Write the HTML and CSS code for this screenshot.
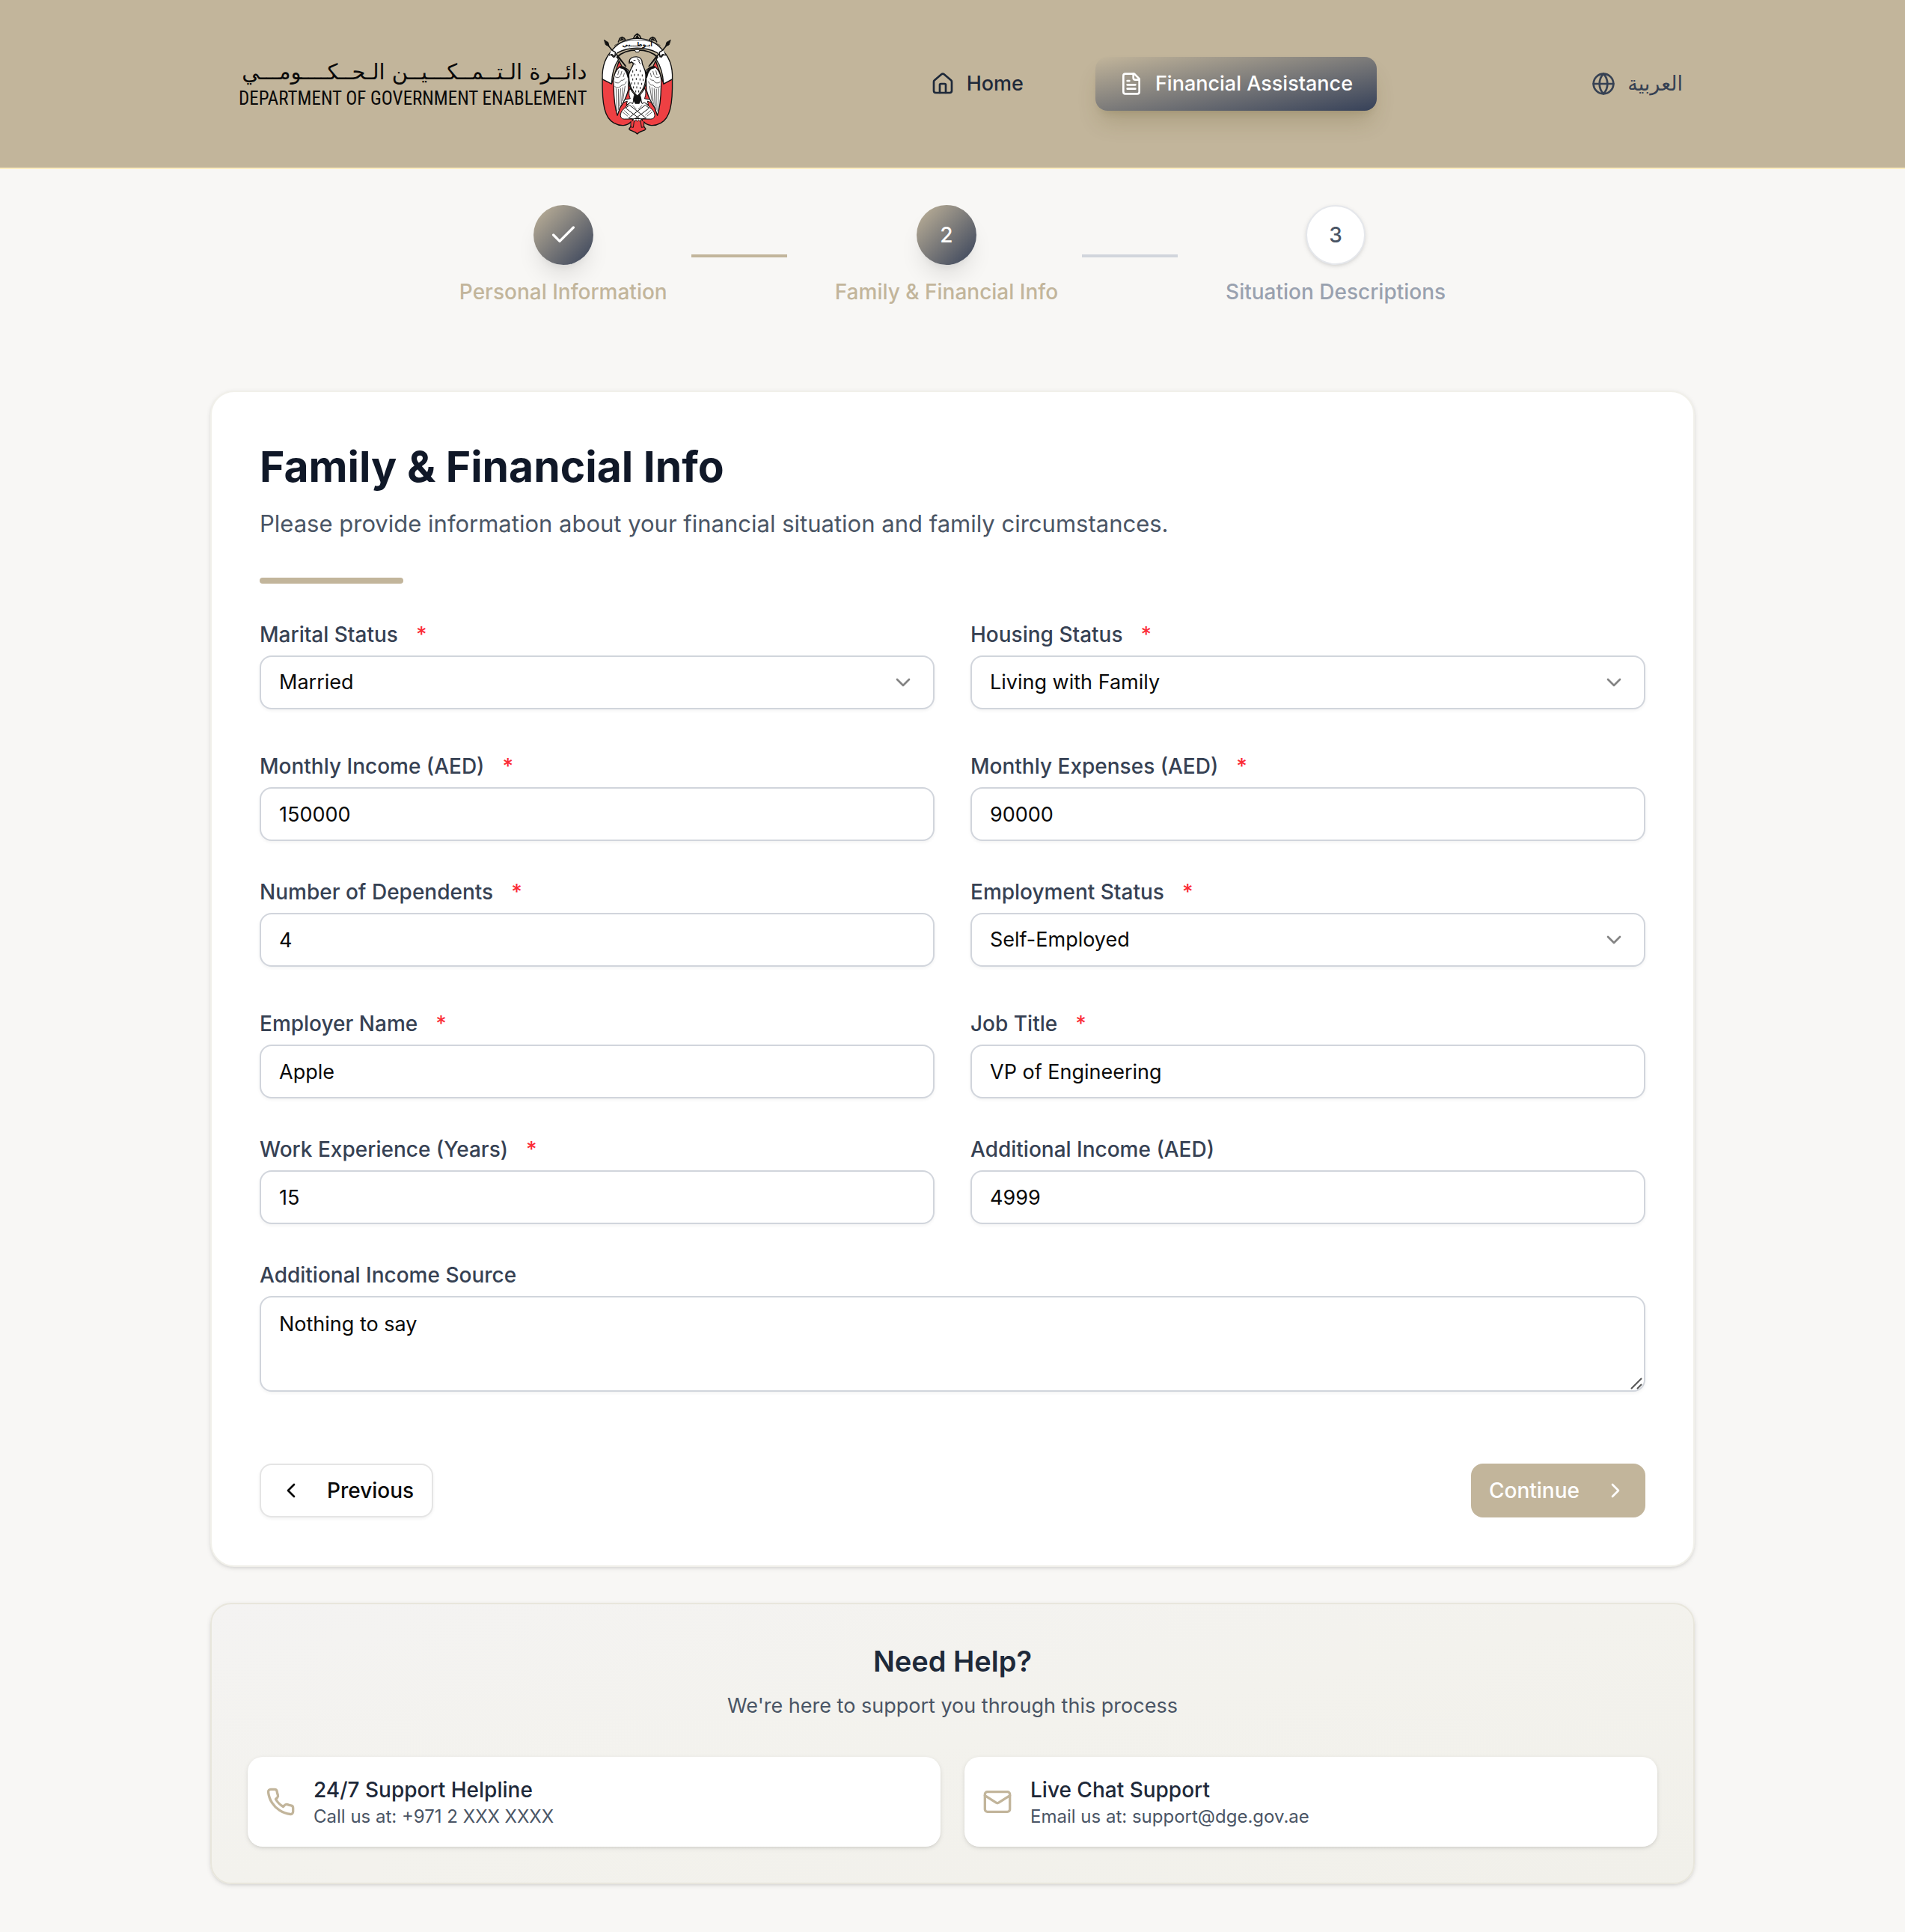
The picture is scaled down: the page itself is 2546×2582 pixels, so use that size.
FILE: index.html
```html
<!DOCTYPE html>
<html lang="en">
<head>
  <meta charset="utf-8">
  <title>Financial Assistance</title>
  <meta name="viewport" content="width=device-width, initial-scale=1">
  <link rel="stylesheet" href="styles.css">
</head>
<body>
  <header class="site-header">
    <div class="header-inner">
      <a class="brand" href="#">
        <span class="brand-text">
          <span class="brand-ar" lang="ar" dir="rtl">دائــرة الـتــمــكـــيــن الـحــكــــومـــي</span>
          <span class="brand-en">DEPARTMENT OF GOVERNMENT ENABLEMENT</span>
        </span>
        <svg class="emblem" viewBox="76 38 294 412" aria-hidden="true">
          <g stroke="#111" stroke-linejoin="round" stroke-linecap="round">
            <path d="M98 80 176 172M347 80 269 172" fill="none" stroke-width="5"/>
            <path d="M90 67l15 9 4 16-13-6zM355 67l-15 9-4 16 13-6z" fill="#111" stroke-width="3"/>
            <path d="M82 222C80 330 92 380 128 400C155 415 182 412 196 396L249 396C263 412 290 415 317 400C353 380 365 330 363 222L328 242L296 150L286 172L222 330L160 172L149 150L119 242Z" fill="#ee4043" stroke-width="4"/>
            <path d="M128 103C95 130 80 175 82 224L119 243C120 205 128 172 146 146L134 110Z" fill="#fff" stroke-width="4"/>
            <path d="M317 103C350 130 365 175 363 224L328 243C325 205 317 172 299 146L311 110Z" fill="#fff" stroke-width="4"/>
            <path d="M146 74l6-14 9-5 9 5 5 8M207 60l5-10 10-9 10 9 5 10M270 68l5-8 9-5 9 5 7 14" fill="#c2b59b" stroke-width="5"/>
            <path d="M154 68l6-9 7 6zM215 60l7-13 7 13zM278 65l7-6 6 9z" fill="#111" stroke-width="3"/>
            <path d="M112 120C136 80 178 60 222 60C267 60 309 80 333 120L318 136L303 118C280 106 252 99 222 99C192 99 165 106 142 118L127 136Z" fill="#fff" stroke-width="4"/>
            <path d="M118 106l16 10-2 18-12-10-10 4M327 106l-16 10 2 18 12-10 10 4" fill="#fff" stroke-width="4"/>
            <path d="M131 88C155 73 190 67 222 67C255 67 290 73 314 88" fill="none" stroke-width="2"/>
            <path d="M140 136C160 116 190 107 222 107C254 107 284 116 304 136" fill="none" stroke-width="5"/>
            <path d="M212 107l4 8h12l4-8" fill="#fff" stroke-width="3"/>
            <path d="M143 128l30 40M302 128l-30 40" fill="none" stroke-width="4"/>
            <!-- wings -->
            <path d="M188 190C178 178 164 172 152 174C132 190 124 220 127 250C128 300 132 340 142 370L149 350L153 338C168 318 178 296 186 268Z" fill="#fff" stroke-width="4"/>
            <path d="M257 190C267 178 281 172 293 174C313 190 321 220 318 250C317 300 313 340 303 370L296 350L292 338C277 318 267 296 259 268Z" fill="#fff" stroke-width="4"/>
            <path d="M156 176C170 176 182 190 187 215M289 176C275 176 263 190 258 215" fill="none" stroke-width="9"/>
            <path d="M134 215q14 8 20-5M132 236q16 10 26-8 8 4 14-6M132 254q14 10 28-6 12 2 18-14M137 262l4 90M146 264l1 82M155 262l-3 70M164 258l-6 66M173 252l-9 58M148 190l-4 16M160 192l-4 14M170 200l-4 14" fill="none" stroke-width="2"/>
            <path d="M311 215q-14 8-20-5M313 236q-16 10-26-8-8 4-14-6M313 254q-14 10-28-6-12 2-18-14M308 262l-4 90M299 264l-1 82M290 262l3 70M281 258l6 66M272 252l9 58M297 190l4 16M285 192l4 14M275 200l4 14" fill="none" stroke-width="2"/>
            <!-- tail ribbons and talons -->
            <path d="M204 305L160 352C150 370 155 384 170 384H276C292 384 297 370 287 352L241 305Z" fill="#fff" stroke-width="3"/>
            <path d="M188 380l66-52 16 12-58 44zM257 380l-66-52-16 12 58 44z" fill="#fff" stroke-width="3"/>
            <path d="M163 356l20 16M170 350l20 18M282 356l-20 16M275 350l-20 18M204 330l14 14M241 330l-14 14" fill="none" stroke-width="2"/>
            <path d="M192 262C186 280 190 292 194 302L172 306L166 318L182 312L178 328L194 318L204 322L212 290ZM253 262C259 280 255 292 251 302L273 306L279 318L263 312L267 328L251 318L241 322L233 290Z" fill="#fff" stroke-width="3"/>
            <path d="M212 284l10 10 11-10 5 22-8 16H214l-8-16z" fill="#111" stroke-width="2"/>
            <!-- body and head -->
            <path d="M190 152C192 140 204 134 218 134C234 134 242 146 242 160C244 172 256 184 256 206C258 240 246 270 222 292C198 270 187 240 188 206C190 190 200 180 206 164C204 156 198 154 194 158Z" fill="#fff" stroke-width="4"/>
            <path d="M190 152l-1 8 6-3 6-4M208 148h6M204 157l10 8M222 142l10 8M228 152l6 10" fill="none" stroke-width="3"/>
            <path d="M204 190v6M218 184v6M234 188v6M198 206v6M211 204v6M226 204v6M242 206v6M204 222v6M218 220v6M233 222v6M246 224v6M199 238v6M212 238v6M226 238v6M240 240v6M207 254v6M220 254v6M234 256v6M216 270v6M228 270v6" fill="none" stroke-width="3"/>
            <!-- pendant -->
            <path d="M204 386L196 414L189 424C194 434 212 430 222 444C232 430 251 434 256 424L249 414L241 386L228 382H217Z" fill="#ee4043" stroke-width="4"/>
            <path d="M196 396v20l10 2 4-30M249 396v20l-10 2-4-30" fill="#ee4043" stroke-width="3"/>
            <path d="M206 384l6 10 5-8 5 9 5-9 5 8 6-10" fill="#fff" stroke-width="2"/>
          </g>
          <text class="emblem-text" x="222" y="91" text-anchor="middle">أبـوظـــبي</text>
        </svg>
      </a>

      <nav class="main-nav" aria-label="Main">
        <a class="nav-link" href="#">
          <svg class="icon" viewBox="0 0 24 24"><path d="M15 21v-8a1 1 0 0 0-1-1h-4a1 1 0 0 0-1 1v8"/><path d="M3 10a2 2 0 0 1 .709-1.528l7-5.999a2 2 0 0 1 2.582 0l7 5.999A2 2 0 0 1 21 10v9a2 2 0 0 1-2 2H5a2 2 0 0 1-2-2z"/></svg>
          Home
        </a>
        <a class="nav-link nav-link-active" href="#" aria-current="page">
          <svg class="icon" viewBox="0 0 24 24"><path d="M15 2H6a2 2 0 0 0-2 2v16a2 2 0 0 0 2 2h12a2 2 0 0 0 2-2V7Z"/><path d="M14 2v4a2 2 0 0 0 2 2h4"/><path d="M10 9H8"/><path d="M16 13H8"/><path d="M16 17H8"/></svg>
          Financial Assistance
        </a>
      </nav>

      <button class="lang-button" type="button">
        <svg class="icon" viewBox="0 0 24 24"><circle cx="12" cy="12" r="10"/><path d="M12 2a14.5 14.5 0 0 0 0 20 14.5 14.5 0 0 0 0-20"/><path d="M2 12h20"/></svg>
        <span lang="ar">العربية</span>
      </button>
    </div>
  </header>

  <main class="page">
    <ol class="steps">
      <li class="step step-done">
        <div class="step-body">
          <span class="step-circle"><svg class="icon" viewBox="0 0 24 24"><path d="M20 6 9 17l-5-5"/></svg></span>
          <span class="step-label">Personal Information</span>
        </div>
        <span class="step-line"></span>
      </li>
      <li class="step step-current" aria-current="step">
        <div class="step-body">
          <span class="step-circle">2</span>
          <span class="step-label">Family &amp; Financial Info</span>
        </div>
        <span class="step-line"></span>
      </li>
      <li class="step">
        <div class="step-body">
          <span class="step-circle">3</span>
          <span class="step-label">Situation Descriptions</span>
        </div>
      </li>
    </ol>

    <section class="form-card">
      <h1 class="form-title">Family &amp; Financial Info</h1>
      <p class="form-subtitle">Please provide information about your financial situation and family circumstances.</p>
      <div class="form-rule"></div>

      <form class="form">
        <div class="form-grid">
          <div class="field field-select">
            <label class="field-label" for="marital">Marital Status <span class="required">*</span></label>
            <div class="select-wrap">
              <select class="control" id="marital"><option>Married</option><option>Single</option></select>
              <svg class="icon select-arrow" viewBox="0 0 24 24"><path d="m6 9 6 6 6-6"/></svg>
            </div>
          </div>
          <div class="field field-select">
            <label class="field-label" for="housing">Housing Status <span class="required">*</span></label>
            <div class="select-wrap">
              <select class="control" id="housing"><option>Living with Family</option><option>Owned</option><option>Rented</option></select>
              <svg class="icon select-arrow" viewBox="0 0 24 24"><path d="m6 9 6 6 6-6"/></svg>
            </div>
          </div>
          <div class="field">
            <label class="field-label" for="income">Monthly Income (AED) <span class="required">*</span></label>
            <input class="control" id="income" type="text" inputmode="numeric" value="150000">
          </div>
          <div class="field">
            <label class="field-label" for="expenses">Monthly Expenses (AED) <span class="required">*</span></label>
            <input class="control" id="expenses" type="text" inputmode="numeric" value="90000">
          </div>
          <div class="field">
            <label class="field-label" for="dependents">Number of Dependents <span class="required">*</span></label>
            <input class="control" id="dependents" type="text" inputmode="numeric" value="4">
          </div>
          <div class="field field-select">
            <label class="field-label" for="employment">Employment Status <span class="required">*</span></label>
            <div class="select-wrap">
              <select class="control" id="employment"><option>Self-Employed</option><option>Employed</option><option>Unemployed</option></select>
              <svg class="icon select-arrow" viewBox="0 0 24 24"><path d="m6 9 6 6 6-6"/></svg>
            </div>
          </div>
          <div class="field">
            <label class="field-label" for="employer">Employer Name <span class="required">*</span></label>
            <input class="control" id="employer" type="text" value="Apple">
          </div>
          <div class="field">
            <label class="field-label" for="job">Job Title <span class="required">*</span></label>
            <input class="control" id="job" type="text" value="VP of Engineering">
          </div>
          <div class="field">
            <label class="field-label" for="experience">Work Experience (Years) <span class="required">*</span></label>
            <input class="control" id="experience" type="text" inputmode="numeric" value="15">
          </div>
          <div class="field">
            <label class="field-label" for="extra">Additional Income (AED)</label>
            <input class="control" id="extra" type="text" inputmode="numeric" value="4999">
          </div>
          <div class="field field-wide">
            <label class="field-label" for="source">Additional Income Source</label>
            <div class="textarea-wrap">
              <textarea class="control control-area" id="source">Nothing to say</textarea>
              <svg class="grip" viewBox="0 0 16 16" aria-hidden="true"><path d="M1 15 15 1M9 15l6-6"/></svg>
            </div>
          </div>
        </div>

        <div class="form-actions">
          <button class="button button-outline" type="button">
            <svg class="icon" viewBox="0 0 24 24"><path d="m15 18-6-6 6-6"/></svg>
            Previous
          </button>
          <button class="button button-primary" type="submit">
            Continue
            <svg class="icon" viewBox="0 0 24 24"><path d="m9 18 6-6-6-6"/></svg>
          </button>
        </div>
      </form>
    </section>

    <section class="help-card">
      <h2 class="help-title">Need Help?</h2>
      <p class="help-subtitle">We're here to support you through this process</p>
      <div class="help-grid">
        <div class="contact">
          <svg class="icon contact-icon" viewBox="0 0 24 24"><path d="M22 16.92v3a2 2 0 0 1-2.18 2 19.79 19.79 0 0 1-8.63-3.07 19.5 19.5 0 0 1-6-6 19.79 19.79 0 0 1-3.07-8.67A2 2 0 0 1 4.11 2h3a2 2 0 0 1 2 1.72 12.84 12.84 0 0 0 .7 2.81 2 2 0 0 1-.45 2.11L8.09 9.91a16 16 0 0 0 6 6l1.27-1.27a2 2 0 0 1 2.11-.45 12.84 12.84 0 0 0 2.81.7A2 2 0 0 1 22 16.92z"/></svg>
          <div>
            <p class="contact-title">24/7 Support Helpline</p>
            <p class="contact-detail">Call us at: +971 2 XXX XXXX</p>
          </div>
        </div>
        <div class="contact">
          <svg class="icon contact-icon" viewBox="0 0 24 24"><rect width="20" height="16" x="2" y="4" rx="2"/><path d="m22 7-8.97 5.7a1.94 1.94 0 0 1-2.06 0L2 7"/></svg>
          <div>
            <p class="contact-title">Live Chat Support</p>
            <p class="contact-detail">Email us at: support@dge.gov.ae</p>
          </div>
        </div>
      </div>
    </section>
  </main>
</body>
</html>
```

FILE: styles.css
```css
:root {
  --gold: #c2b59b;
  --navy: #364159;
  --shadow-sm: 0 2px 6px rgba(0, 0, 0, .1), 0 2px 4px -2px rgba(0, 0, 0, .1);
  --shadow-xs: 0 2px 4px rgba(0, 0, 0, .05);
  --shadow-lg: 0 20px 30px -6px rgba(0, 0, 0, .1), 0 8px 12px -8px rgba(0, 0, 0, .1);
}

* {
  box-sizing: border-box;
}

body {
  margin: 0;
  background: #f8f7f5;
  color: #0a0a0a;
  font-family: Inter, "Liberation Sans", sans-serif;
  font-size: 28px;
  line-height: 40px;
}

h1, h2, p, ol {
  margin: 0;
  padding: 0;
}

.icon {
  flex: none;
  width: 32px;
  height: 32px;
  fill: none;
  stroke: currentColor;
  stroke-width: 2;
  stroke-linecap: round;
  stroke-linejoin: round;
}

/* Header */

.site-header {
  background: var(--gold);
  border-bottom: 2px solid #fdeec0;
}

.header-inner {
  display: flex;
  align-items: center;
  justify-content: space-between;
  max-width: 1984px;
  min-height: 224px;
  margin: 0 auto;
  padding: 0 16px 0 38px;
}

.brand {
  display: flex;
  align-items: center;
  gap: 18px;
  padding-right: 24px;
  color: #0a0a0a;
  text-decoration: none;
}

.brand-text {
  display: flex;
  flex-direction: column;
  align-items: flex-end;
  white-space: nowrap;
}

.brand-ar {
  font-family: "DejaVu Sans", sans-serif;
  font-size: 29px;
  line-height: 40px;
}

.brand-en {
  font-family: "Liberation Sans Narrow", "Roboto Condensed", "Liberation Sans", sans-serif;
  font-size: 25px;
  line-height: 32px;
}

.emblem {
  flex: none;
  width: 98px;
  height: 137px;
}

.emblem-text {
  font: bold 24px "DejaVu Sans", sans-serif;
  fill: #111;
}

.main-nav {
  display: flex;
  gap: 64px;
}

.nav-link {
  display: flex;
  align-items: center;
  gap: 16px;
  padding: 16px 32px;
  border-radius: 16px;
  color: #1e2939;
  font-size: 27px;
  font-weight: 500;
  text-decoration: none;
  white-space: nowrap;
}

.nav-link-active {
  background: linear-gradient(to bottom right, var(--gold), var(--navy));
  box-shadow: 0 20px 30px -6px rgba(80, 70, 20, .2), 0 8px 12px -8px rgba(80, 70, 20, .2);
  color: #fff;
}

.lang-button {
  display: flex;
  align-items: center;
  gap: 16px;
  padding: 0;
  border: 0;
  background: none;
  color: #364153;
  font: 500 27px/40px Inter, "DejaVu Sans", sans-serif;
}

/* Steps */

.page {
  max-width: 1984px;
  margin: 0 auto;
  padding: 48px 0 64px;
}

.steps {
  display: flex;
  justify-content: center;
  gap: 64px;
  margin-bottom: 112px;
  list-style: none;
}

.step {
  display: flex;
  align-items: center;
  gap: 32px;
}

.step-body {
  display: flex;
  flex-direction: column;
  align-items: center;
  gap: 16px;
}

.step-circle {
  display: flex;
  align-items: center;
  justify-content: center;
  width: 80px;
  height: 80px;
  border: 2px solid #e5e7eb;
  border-radius: 50%;
  background: #fff;
  box-shadow: var(--shadow-sm);
  color: #4a5565;
  font-weight: 500;
}

.step-label {
  color: #99a1af;
  font-weight: 500;
  white-space: nowrap;
}

.step-line {
  width: 128px;
  height: 4px;
  background: #d1d5dc;
}

.step-done .step-circle,
.step-current .step-circle {
  border: 0;
  background: linear-gradient(to bottom right, var(--gold), var(--navy));
  box-shadow: var(--shadow-lg);
  color: #fff;
}

.step-done .step-circle .icon {
  width: 40px;
  height: 40px;
}

.step-done .step-label,
.step-current .step-label {
  color: var(--gold);
}

.step-done .step-line {
  background: var(--gold);
}

/* Form */

.form-card {
  padding: 64px;
  border: 2px solid #f1f0ea;
  border-radius: 32px;
  background: #fff;
  box-shadow: var(--shadow-sm);
}

.form-title {
  color: #101828;
  font-size: 57px;
  font-weight: 700;
  line-height: 72px;
}

.form-subtitle {
  margin-top: 16px;
  color: #4a5565;
  font-size: 31px;
  line-height: 48px;
}

.form-rule {
  width: 192px;
  height: 8px;
  margin: 48px 0;
  border-radius: 4px;
  background: var(--gold);
}

.form-grid {
  display: grid;
  grid-template-columns: 1fr 1fr;
  gap: 48px;
}

.field {
  display: flex;
  flex-direction: column;
  gap: 8px;
  min-width: 0;
}

.field-select {
  padding-bottom: 8px;
}

.field-wide {
  grid-column: 1 / -1;
}

.field-label {
  display: flex;
  gap: 24px;
  color: #364153;
  font-weight: 500;
}

.required {
  color: #fb2c36;
}

.control {
  display: block;
  width: 100%;
  height: 72px;
  margin: 0;
  padding: 0 24px;
  border: 2px solid #d1d5dc;
  border-radius: 16px;
  background: #fff;
  box-shadow: var(--shadow-xs);
  color: #0a0a0a;
  font: inherit;
  font-size: 27px;
  appearance: none;
}

.control-area {
  height: 128px;
  padding: 16px 24px;
  resize: none;
}

.select-wrap,
.textarea-wrap {
  position: relative;
}

.select-arrow {
  position: absolute;
  top: 20px;
  right: 26px;
  color: #848484;
  pointer-events: none;
}

.grip {
  position: absolute;
  right: 4px;
  bottom: 3px;
  width: 16px;
  height: 16px;
  fill: none;
  stroke: #555;
  stroke-width: 2;
  pointer-events: none;
}

.form-actions {
  display: flex;
  justify-content: space-between;
  margin-top: 96px;
}

.button {
  display: flex;
  align-items: center;
  gap: 32px;
  height: 72px;
  padding: 0 24px;
  border: 0;
  border-radius: 16px;
  font: inherit;
  font-weight: 500;
}

.button-outline {
  border: 2px solid #e5e5e5;
  background: #fff;
  box-shadow: var(--shadow-xs);
  color: #0a0a0a;
}

.button-primary {
  background: var(--gold);
  color: #fff;
}

/* Help */

.help-card {
  margin-top: 48px;
  padding: 48px;
  border: 2px solid #e8e6dc;
  border-radius: 28px;
  background: linear-gradient(to bottom right, #f4f3f2, #f3f2ed 50%, #f1f0ea);
  box-shadow: var(--shadow-sm);
  text-align: center;
}

.help-title {
  color: #1e2939;
  font-size: 38px;
  font-weight: 600;
  line-height: 56px;
}

.help-subtitle {
  margin-top: 12px;
  color: #4a5565;
  font-size: 27px;
}

.help-grid {
  display: grid;
  grid-template-columns: 1fr 1fr;
  gap: 32px;
  margin-top: 48px;
  text-align: left;
}

.contact {
  display: flex;
  align-items: center;
  gap: 24px;
  padding: 24px;
  border-radius: 20px;
  background: #fff;
  box-shadow: var(--shadow-sm);
}

.contact-icon {
  width: 40px;
  height: 40px;
  color: var(--gold);
}

.contact-title {
  color: #1e2939;
  font-weight: 500;
}

.contact-detail {
  color: #4a5565;
  font-size: 24px;
  line-height: 32px;
}
```
